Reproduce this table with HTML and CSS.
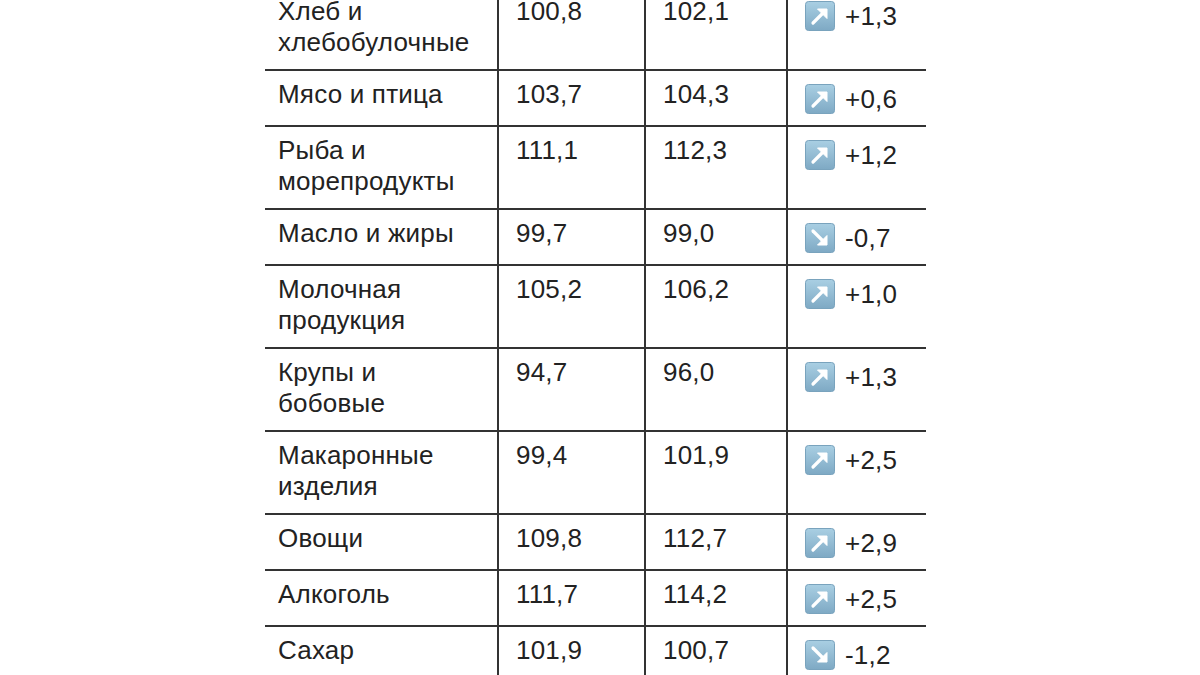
FILE: index.html
```html
<!DOCTYPE html>
<html lang="ru">
<head>
<meta charset="utf-8">
<link rel="stylesheet" href="styles.css">
<title>Цены</title>
</head>
<body>
<svg width="0" height="0" class="defs" aria-hidden="true">
  <defs>
    <linearGradient id="g" x1="0" y1="0" x2="0" y2="1">
      <stop offset="0" stop-color="#a9cfe3"/>
      <stop offset="1" stop-color="#7ea9c4"/>
    </linearGradient>
    <symbol id="up" viewBox="0 0 30 30">
      <rect x="0.5" y="0.5" width="29" height="29" rx="3" fill="url(#g)" stroke="#79a3bd"/>
      <path d="M8 22 L18 12" stroke="#fff" stroke-width="3.2" stroke-linecap="round"/>
      <path d="M12.5 8 H22 V17.5 Z" fill="#fff" stroke="#fff" stroke-width="1" stroke-linejoin="round"/>
    </symbol>
    <symbol id="down" viewBox="0 0 30 30">
      <rect x="0.5" y="0.5" width="29" height="29" rx="3" fill="url(#g)" stroke="#79a3bd"/>
      <path d="M8 8 L18 18" stroke="#fff" stroke-width="3.2" stroke-linecap="round"/>
      <path d="M22 12.5 V22 H12.5 Z" fill="#fff" stroke="#fff" stroke-width="1" stroke-linejoin="round"/>
    </symbol>
  </defs>
</svg>
<main class="page">
  <table class="prices">
    <colgroup>
      <col class="c1"><col class="c2"><col class="c3"><col class="c4">
    </colgroup>
    <tbody>
      <tr><td>Хлеб и<br>хлебобулочные</td><td>100,8</td><td>102,1</td><td class="chg"><span class="delta"><svg class="ico"><use href="#up"/></svg>+1,3</span></td></tr>
      <tr><td>Мясо и птица</td><td>103,7</td><td>104,3</td><td class="chg"><span class="delta"><svg class="ico"><use href="#up"/></svg>+0,6</span></td></tr>
      <tr><td>Рыба и<br>морепродукты</td><td>111,1</td><td>112,3</td><td class="chg"><span class="delta"><svg class="ico"><use href="#up"/></svg>+1,2</span></td></tr>
      <tr><td>Масло и жиры</td><td>99,7</td><td>99,0</td><td class="chg"><span class="delta"><svg class="ico"><use href="#down"/></svg>-0,7</span></td></tr>
      <tr><td>Молочная<br>продукция</td><td>105,2</td><td>106,2</td><td class="chg"><span class="delta"><svg class="ico"><use href="#up"/></svg>+1,0</span></td></tr>
      <tr><td>Крупы и<br>бобовые</td><td>94,7</td><td>96,0</td><td class="chg"><span class="delta"><svg class="ico"><use href="#up"/></svg>+1,3</span></td></tr>
      <tr><td>Макаронные<br>изделия</td><td>99,4</td><td>101,9</td><td class="chg"><span class="delta"><svg class="ico"><use href="#up"/></svg>+2,5</span></td></tr>
      <tr><td>Овощи</td><td>109,8</td><td>112,7</td><td class="chg"><span class="delta"><svg class="ico"><use href="#up"/></svg>+2,9</span></td></tr>
      <tr><td>Алкоголь</td><td>111,7</td><td>114,2</td><td class="chg"><span class="delta"><svg class="ico"><use href="#up"/></svg>+2,5</span></td></tr>
      <tr><td>Сахар</td><td>101,9</td><td>100,7</td><td class="chg"><span class="delta"><svg class="ico"><use href="#down"/></svg>-1,2</span></td></tr>
    </tbody>
  </table>
</main>
</body>
</html>
```
FILE: styles.css
```css
html, body {
  margin: 0;
  padding: 0;
  background: #fff;
}
body {
  height: 675px;
  overflow: hidden;
  font-family: "Liberation Sans", Arial, sans-serif;
  color: #222;
}
.defs {
  position: absolute;
  width: 0;
  height: 0;
}
.page {
  padding-left: 265px;
}
.prices {
  margin-top: -12px;
  width: 661px;
  border-collapse: collapse;
  table-layout: fixed;
  font-size: 26px;
  line-height: 31px;
  letter-spacing: 0.2px;
}
.c1 { width: 233px; }
.c2 { width: 147px; }
.c3 { width: 142px; }
.c4 { width: 139px; }
.prices tr {
  border-bottom: 2px solid #333;
}
.prices td {
  vertical-align: top;
  padding: 8px 8px 11px 17px;
  white-space: nowrap;
}
.prices td:first-child {
  padding-left: 13px;
}
.prices td + td {
  border-left: 2px solid #333;
}
.prices td.chg {
  padding-top: 13px;
  padding-bottom: 11px;
}
.delta {
  display: flex;
  align-items: center;
  gap: 10px;
  height: 30px;
}
.ico {
  width: 30px;
  height: 30px;
  flex: none;
}
```
